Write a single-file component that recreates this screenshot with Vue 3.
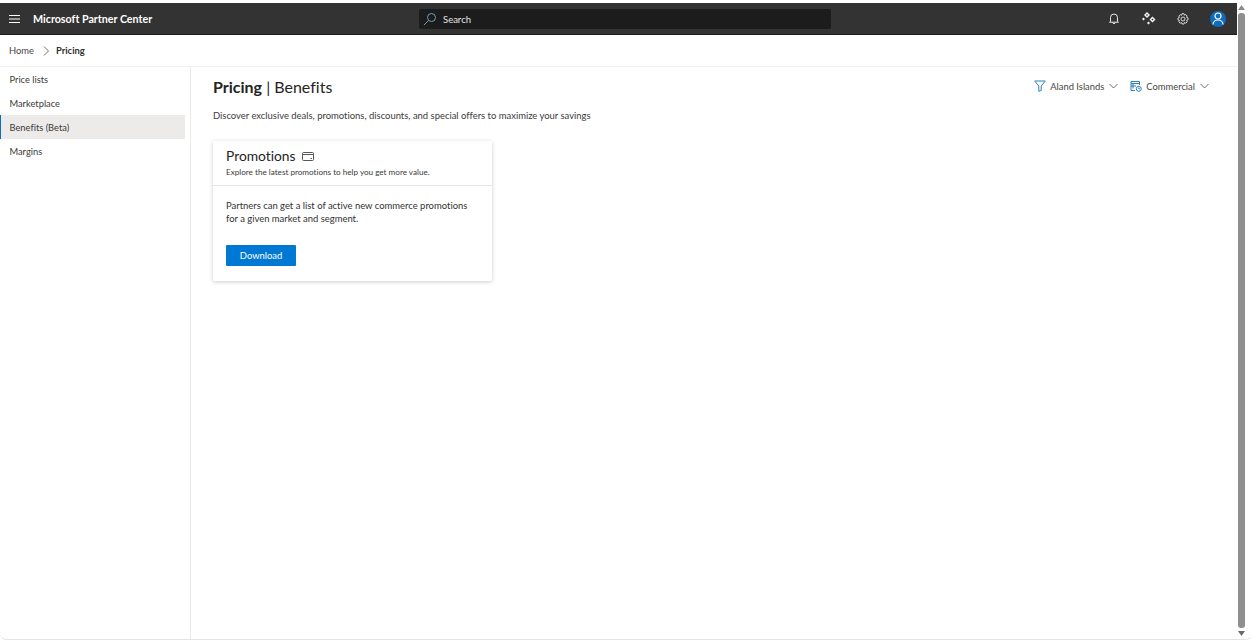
<script setup>
const navItems = [
  { label: 'Price lists', active: false },
  { label: 'Marketplace', active: false },
  { label: 'Benefits (Beta)', active: true },
  { label: 'Margins', active: false },
]
</script>

<template>
  <div class="window">
    <div class="page">
      <header class="topbar">
        <div class="brand">
          <svg class="hamburger" width="11" height="8" viewBox="0 0 11 8"><path d="M0 .5h11M0 4h11M0 7.500h11" stroke="#fff" stroke-width="1" fill="none"/></svg>
          <span class="brand-name">Microsoft Partner Center</span>
        </div>
        <div class="search">
          <svg width="14" height="14" viewBox="0 0 14 14" fill="none" stroke="#6f9fc0" stroke-width="1"><circle cx="8.500" cy="5.500" r="4"/><path d="M5.500 8.500 1 13"/></svg>
          <span class="search-label">Search</span>
        </div>
        <div class="actions">
          <svg class="a-bell" width="10" height="12" viewBox="0 0 10 12" fill="none" stroke="#e8e8e8" stroke-width="1"><path d="M1.500 8.500V4.500a3.500 3.500 0 0 1 7 0v4l1 .7H.500zM3.600 9.500c.2 1.500 2.600 1.500 2.800 0"/></svg>
          <svg class="a-spark" width="14" height="13" viewBox="0 0 14 13" fill="#f2f2f2"><path d="M5 0l3 3-3 3-3-3z"/><path d="M5 2 6 3 5 4 4 3z" fill="#333"/><path d="M1.500 5.500 3 7 1.500 8.500 0 7zM10.500 4.500l3 3-3 3-3-3z"/><path d="M10.500 6.500 11.500 7.500 10.500 8.500 9.500 7.500z" fill="#333"/><path d="M6.500 9.500 8 11 6.500 12.500 5 11z"/></svg>
          <svg class="a-gear" width="12" height="12" viewBox="0 0 12 12" fill="none" stroke="#d8d8d8" stroke-width="1"><circle cx="6" cy="6" r="2"/><path d="M5 .7h2l.4 1.500 1.400-.6 1.400 1.400-.7 1.300 1.500.6v2l-1.500.5.700 1.400-1.400 1.400-1.400-.7-.4 1.500H5l-.4-1.500-1.400.7-1.400-1.400.7-1.400L1 7V5l1.500-.6-.7-1.300L3.200 1.700l1.400.6z"/></svg>
          <div class="avatar"><svg width="12" height="13" viewBox="0 0 12 13" fill="none" stroke="#fff" stroke-width="1.200"><circle cx="6" cy="4" r="3"/><path d="M1 12.500c0-6 10-6 10 0"/></svg></div>
        </div>
      </header>

      <nav class="crumbs">
        <span class="crumb">Home</span>
        <svg class="crumb-sep" width="7" height="10" viewBox="0 0 7 10" fill="none" stroke="#605e5c" stroke-width=".9"><path d="M1 .5 5.500 5 1 9.500"/></svg>
        <span class="crumb current">Pricing</span>
      </nav>

      <div class="body">
        <aside class="side">
          <a v-for="item in navItems" :key="item.label" class="nav-item" :class="{ active: item.active }">{{ item.label }}</a>
        </aside>

        <main class="main">
          <div class="title-row">
            <h1 class="title"><span class="strong">Pricing</span> | Benefits</h1>
            <div class="filters">
              <div class="filter">
                <svg width="12" height="12" viewBox="0 0 12 12" fill="none" stroke="#2f7fb8" stroke-width="1"><path d="M.7 1h10.600L7.200 6v4.500L4.800 11.300V6z"/></svg>
                <span>Aland Islands</span>
                <svg class="chev" width="9" height="6" viewBox="0 0 9 6" fill="none" stroke="#605e5c" stroke-width=".9"><path d="M.5 1 4.500 5 8.500 1"/></svg>
              </div>
              <div class="filter second">
                <svg width="12" height="12" viewBox="0 0 12 12" fill="none" stroke="#2f7fb8" stroke-width="1"><path d="M5 10.500H1V1.500h8.500V5M1 3.500h8.500M3 3.500v5M1 6h5"/><circle cx="8.800" cy="8.800" r="2.500"/><path d="M8.800 7.500v1.400h1.100"/></svg>
                <span>Commercial</span>
                <svg class="chev" width="9" height="6" viewBox="0 0 9 6" fill="none" stroke="#605e5c" stroke-width=".9"><path d="M.5 1 4.500 5 8.500 1"/></svg>
              </div>
            </div>
          </div>
          <p class="desc">Discover exclusive deals, promotions, discounts, and special offers to maximize your savings</p>

          <section class="card">
            <div class="card-head">
              <div class="card-title">
                <span>Promotions</span>
                <svg width="12" height="9" viewBox="0 0 12 9" fill="none" stroke="#444" stroke-width=".9"><rect x=".5" y=".5" width="11" height="8" rx="1"/><path d="M.5 2.500h11M8.500 6.500h1.500"/></svg>
              </div>
              <div class="card-sub">Explore the latest promotions to help you get more value.</div>
            </div>
            <div class="card-body">
              <p class="card-text">Partners can get a list of active new commerce promotions for a given market and segment.</p>
              <button class="btn">Download</button>
            </div>
          </section>
        </main>
      </div>
    </div>

    <div class="scrollbar">
      <svg width="7" height="5" viewBox="0 0 7 5"><path d="M3.500 0 7 5H0z" fill="#8a8a8a"/></svg>
      <div class="thumb"></div>
      <svg width="7" height="5" viewBox="0 0 7 5"><path d="M0 0h7L3.500 5z" fill="#6a6a6a"/></svg>
    </div>
  </div>
</template>

<style>
html, body { margin: 0; background: #fff; overflow: hidden; }
</style>

<style scoped>
.window {
  width: 1252px;
  height: 640px;
  box-sizing: border-box;
  padding: 3px 7px 0 0;
  display: flex;
  border-bottom: 1px solid #e4e4e4;
  border-radius: 0 0 6px 6px;
  font-family: Lato, "Noto Sans", sans-serif;
  font-variant-ligatures: none;
  color: #323130;
  overflow: hidden;
}
.page { flex: 1; min-width: 0; display: flex; flex-direction: column; }
.topbar {
  height: 32px;
  flex: none;
  background: #333;
  box-sizing: border-box;
  border-bottom: 1px solid #1c1c1c;
  display: flex;
  align-items: center;
}
.brand { display: flex; align-items: center; width: 419px; padding-left: 9px; box-sizing: border-box; }
.brand-name { margin-left: 13px; color: #fff; font-size: 10.700px; font-weight: 700; white-space: nowrap; }
.search {
  width: 412px;
  height: 20px;
  background: #1c1c1c;
  border-radius: 2px;
  display: flex;
  align-items: center;
  gap: 6px;
  padding-left: 4px;
  box-sizing: border-box;
  color: #e6e6e6;
  font-size: 9.500px;
}
.search-label { margin-top: 1px; }
.actions { margin-left: auto; display: flex; align-items: center; padding-right: 11px; }
.a-spark { margin-left: 23px; }
.a-gear { margin-left: 21px; }
.avatar {
  margin-left: 21px;
  width: 16px; height: 16px;
  border-radius: 50%;
  background: #0f6cbd;
  display: flex; align-items: center; justify-content: center;
}
.crumbs {
  height: 32px;
  flex: none;
  box-sizing: border-box;
  border-bottom: 1px solid #f0efee;
  display: flex;
  align-items: center;
  gap: 9px;
  padding-left: 9px;
  font-size: 9.400px;
}
.crumb { color: #484644; }
.crumb-sep { margin-right: -3px; }
.current { font-weight: 700; color: #323130; }
.body { flex: 1; min-height: 0; display: flex; }
.side {
  width: 191px;
  flex: none;
  box-sizing: border-box;
  border-right: 1px solid #ebebeb;
  padding-right: 5px;
}
.nav-item {
  display: flex;
  align-items: center;
  height: 24px;
  box-sizing: border-box;
  padding-left: 9.500px;
  font-size: 9.300px;
  color: #3b3a39;
}
.active { background: #edebe9; border-left: 1px solid #0f6cbd; padding-left: 8.500px; }
.main { flex: 1; min-width: 0; padding: 9px 28px 0 22px; box-sizing: border-box; }
.title-row { display: flex; justify-content: space-between; align-items: center; height: 22px; }
.title { margin: 0; font-size: 16px; font-weight: 400; line-height: 22px; color: #252423; }
.strong { font-weight: 700; }
.filters { display: flex; align-items: center; margin-bottom: 2px; font-size: 9.400px; color: #484644; }
.filter { display: flex; align-items: center; gap: 4px; }
.chev { margin-left: 1px; }
.second { margin-left: 12px; }
.desc { margin: 11px 0 0; font-size: 9.450px; line-height: 13px; color: #3b3a39; }
.card {
  margin-top: 19px;
  width: 279px;
  height: 140px;
  background: #fff;
  border-radius: 2px;
  box-shadow: 0 1px 4px rgba(0, 0, 0, .2);
}
.card-head { height: 45px; box-sizing: border-box; padding: 6px 13px 0; border-bottom: 1px solid #e6e6e6; }
.card-title { display: flex; align-items: center; gap: 6px; font-size: 13.800px; line-height: 18px; color: #252423; }
.card-sub { margin-top: 2px; font-size: 8.150px; line-height: 11px; color: #3b3a39; white-space: nowrap; }
.card-body { padding: 13px 13px 0; }
.card-text { margin: 0; font-size: 9.450px; line-height: 13px; color: #323130; }
.btn {
  display: block;
  margin-top: 20px;
  width: 70px;
  height: 21px;
  border: 0;
  border-radius: 1px;
  background: #0078d4;
  color: #fff;
  font-family: inherit;
  font-size: 9.400px;
  padding: 0;
}
.scrollbar {
  width: 7px;
  flex: none;
  margin-left: 1px;
  display: flex;
  flex-direction: column;
  align-items: center;
  padding: 2px 0 3px;
  gap: 3px;
}
.thumb { flex: 1; width: 7px; background: #8f8f8f; border-radius: 3px; }
</style>
